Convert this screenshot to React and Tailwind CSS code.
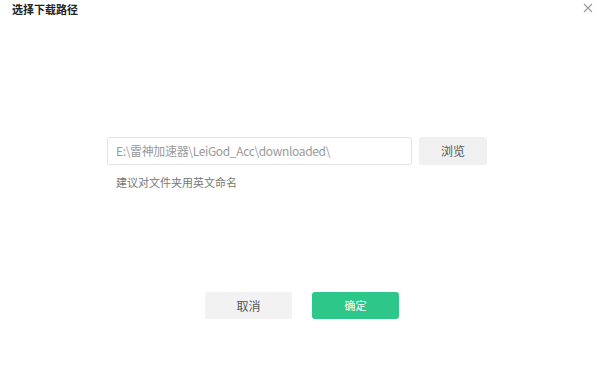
import React from 'react';

// 选择下载路径 弹窗
export default function App() {
    return (
        <div className="w-[600px] h-[380px] bg-white flex flex-col text-[12px] text-[#333]" style={{ fontFamily: '"Noto Sans CJK SC", "Liberation Sans", sans-serif' }}>
            <div className="flex items-start justify-between h-[20px] pl-[12px] pr-[5px]">
                <h1 className="text-[11px] leading-[14px] font-bold text-[#222] pt-[2px]">选择下载路径</h1>
                <button className="w-[14px] h-[14px] flex items-center justify-center mt-[1px] text-[#9a9a9a]">
                    <svg width="10" height="10" viewBox="0 0 10 10" fill="none" stroke="currentColor" strokeWidth="1.1">
                        <path d="M1 1L9 9M9 1L1 9" />
                    </svg>
                </button>
            </div>

            <div className="flex flex-col pl-[107px] mt-[117px]">
                <div className="flex items-center gap-[7px]">
                    <div className="w-[305px] h-[28px] border border-[#e3e3e3] rounded-[3px] flex items-center pl-[8px] text-[#9a9a9a] text-[12px] tracking-[-0.35px]">
                        E:\雷神加速器\LeiGod_Acc\downloaded\
                    </div>
                    <button className="w-[68px] h-[28px] bg-[#f0f0f0] rounded-[2px] text-[#555] text-[12px]">浏览</button>
                </div>
                <p className="pl-[9px] mt-[10px] text-[11px] leading-[14px] text-[#777]">建议对文件夹用英文命名</p>
            </div>

            <div className="flex justify-center gap-[20px] mt-[103px] pl-[4px]">
                <button className="w-[87px] h-[27px] bg-[#f2f2f2] rounded-[2px] text-[#555] text-[12px]">取消</button>
                <button className="w-[87px] h-[27px] bg-[#2ec78a] rounded-[3px] text-white text-[11px]">确定</button>
            </div>
        </div>
    );
}
